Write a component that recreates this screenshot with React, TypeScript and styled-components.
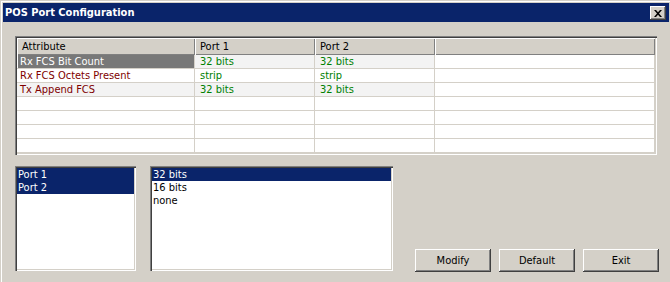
import React from 'react'
import styled, { createGlobalStyle } from 'styled-components'

const GlobalStyle = createGlobalStyle`
  html, body {
    margin: 0;
    padding: 0;
    background: #d4d0c8;
  }
  body {
    font-family: "DejaVu Sans Condensed", "DejaVu Sans", sans-serif;
    font-size: 11px;
    color: #000000;
  }
`

interface Row {
  attribute: string
  port1: string
  port2: string
}

const rows: Row[] = [
  { attribute: 'Rx FCS Bit Count', port1: '32 bits', port2: '32 bits' },
  { attribute: 'Rx FCS Octets Present', port1: 'strip', port2: 'strip' },
  { attribute: 'Tx Append FCS', port1: '32 bits', port2: '32 bits' },
]

const ports = ['Port 1', 'Port 2']
const options = ['32 bits', '16 bits', 'none']

const sunken = `
  inset 1px 1px 0 #808080,
  inset 2px 2px 0 #404040,
  inset -1px -1px 0 #ffffff,
  inset -2px -2px 0 #d4d0c8
`

const raised = `
  inset -1px -1px 0 #404040,
  inset 1px 1px 0 #ffffff,
  inset -2px -2px 0 #808080,
  inset 2px 2px 0 #d4d0c8
`

const App: React.FC = () => {
  const emptyRows = 4

  return (
    <>
      <GlobalStyle />
      <StyledWindow>
        <StyledTitleBar>
          <StyledTitle>POS Port Configuration</StyledTitle>
          <StyledCloseButton>
            <svg width="8" height="7" viewBox="0 0 8 7">
              <path d="M0 0h2l2 2.2L6 0h2L5 3.5 8 7H6L4 4.8 2 7H0l3-3.5z" fill="#000000" />
            </svg>
          </StyledCloseButton>
        </StyledTitleBar>
        <StyledBody>
          <StyledTable>
            <StyledHeaderCell>Attribute</StyledHeaderCell>
            <StyledHeaderCell>Port 1</StyledHeaderCell>
            <StyledHeaderCell>Port 2</StyledHeaderCell>
            <StyledHeaderCell />
            {rows.map((row, i) => (
              <React.Fragment key={row.attribute}>
                <StyledAttrCell $shaded={i % 2 === 0} $selected={i === 0}>
                  {row.attribute}
                </StyledAttrCell>
                <StyledValueCell $shaded={i % 2 === 0}>{row.port1}</StyledValueCell>
                <StyledValueCell $shaded={i % 2 === 0}>{row.port2}</StyledValueCell>
                <StyledValueCell />
              </React.Fragment>
            ))}
            {Array.from({ length: emptyRows }).map((_, i) => (
              <React.Fragment key={i}>
                <StyledValueCell />
                <StyledValueCell />
                <StyledValueCell />
                <StyledValueCell />
              </React.Fragment>
            ))}
          </StyledTable>
          <StyledBottom>
            <StyledListBox $width={121}>
              {ports.map((p) => (
                <StyledListItem key={p} $selected>{p}</StyledListItem>
              ))}
            </StyledListBox>
            <StyledListBox $width={243}>
              {options.map((o, i) => (
                <StyledListItem key={o} $selected={i === 0}>{o}</StyledListItem>
              ))}
            </StyledListBox>
            <StyledButtons>
              <StyledButton>Modify</StyledButton>
              <StyledButton>Default</StyledButton>
              <StyledButton>Exit</StyledButton>
            </StyledButtons>
          </StyledBottom>
        </StyledBody>
      </StyledWindow>
    </>
  )
}

const StyledWindow = styled.div`
  width: 670px;
  height: 282px;
  box-sizing: border-box;
  padding: 3px 1px 0 3px;
  background: #d4d0c8;
  box-shadow: inset 1px 1px 0 #d4d0c8, inset 2px 2px 0 #ffffff;
  display: flex;
  flex-direction: column;
`

const StyledTitleBar = styled.div`
  height: 19px;
  background: #0a246a;
  display: flex;
  align-items: center;
  justify-content: space-between;
  padding: 0 3px 0 2px;
`

const StyledTitle = styled.span`
  color: #ffffff;
  font-weight: bold;
  font-size: 11px;
`

const StyledCloseButton = styled.div`
  width: 16px;
  height: 14px;
  background: #d4d0c8;
  box-shadow: ${raised};
  display: flex;
  align-items: center;
  justify-content: center;
  margin-top: 1px;
`

const StyledBody = styled.div`
  flex: 1;
  display: flex;
  flex-direction: column;
  padding: 14px 12px 0 12px;
`

const StyledTable = styled.div`
  height: 119px;
  box-sizing: border-box;
  padding: 2px;
  background: #ffffff;
  box-shadow: ${sunken};
  display: grid;
  grid-template-columns: 178px 120px 120px 1fr;
  grid-template-rows: 17px repeat(7, 14px);
  align-content: start;
`

const StyledHeaderCell = styled.div`
  background: #d4d0c8;
  box-shadow: inset 1px 1px 0 #ffffff, inset -1px -1px 0 #808080;
  padding-left: 5px;
  line-height: 17px;
  white-space: nowrap;
`

const StyledAttrCell = styled.div<{ $shaded?: boolean; $selected?: boolean }>`
  border-right: 1px solid #d4d0c8;
  border-bottom: 1px solid #d4d0c8;
  background: ${(p) => (p.$shaded ? '#f3f3f3' : '#ffffff')};
  color: #800000;
  line-height: 13px;
  padding-left: 1px;
  text-indent: 2px;
  white-space: nowrap;
  ${(p) =>
    p.$selected &&
    `
    background: #787878;
    color: #ffffff;
    background-clip: content-box;
  `}
`

const StyledValueCell = styled.div<{ $shaded?: boolean }>`
  border-right: 1px solid #d4d0c8;
  border-bottom: 1px solid #d4d0c8;
  background: ${(p) => (p.$shaded ? '#f3f3f3' : '#ffffff')};
  color: #008000;
  line-height: 13px;
  padding-left: 5px;
  white-space: nowrap;
`

const StyledBottom = styled.div`
  margin-top: 11px;
  display: flex;
  align-items: flex-start;
  gap: 14px;
`

const StyledListBox = styled.div<{ $width: number }>`
  width: ${(p) => p.$width}px;
  height: 105px;
  box-sizing: border-box;
  padding: 2px;
  background: #ffffff;
  box-shadow: ${sunken};
`

const StyledListItem = styled.div<{ $selected?: boolean }>`
  height: 13px;
  line-height: 13px;
  padding-left: 1px;
  white-space: nowrap;
  background: ${(p) => (p.$selected ? '#0a246a' : 'transparent')};
  color: ${(p) => (p.$selected ? '#ffffff' : '#000000')};
`

const StyledButtons = styled.div`
  margin-left: auto;
  margin-right: -2px;
  margin-top: 83px;
  display: flex;
  gap: 8px;
`

const StyledButton = styled.div`
  width: 76px;
  height: 23px;
  box-sizing: border-box;
  background: #d4d0c8;
  box-shadow: ${raised};
  display: flex;
  align-items: center;
  justify-content: center;
  white-space: nowrap;
`

export default App
